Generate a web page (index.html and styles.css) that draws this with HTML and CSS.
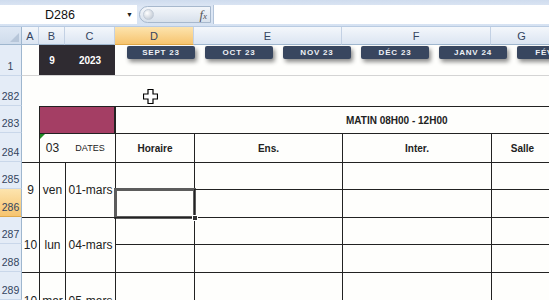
FILE: index.html
```html
<!DOCTYPE html>
<html lang="fr">
<head>
  <meta charset="UTF-8" />
  <meta name="viewport" content="width=device-width, initial-scale=1.0" />
  <title>Planning - Feuille</title>
  <link rel="stylesheet" href="styles.css">
</head>
<body>
  <!-- Barre de formule -->
  <div class="formula-bar">
    <div class="name-box">
      <span class="ref">D286</span>
      <span class="arrow">&#9660;</span>
    </div>
    <div class="fx-btn">
      <span class="knob"></span>
      <span class="fx">f<small>x</small></span>
    </div>
    <div class="formula-input"></div>
  </div>

  <!-- Feuille -->
  <div class="sheet">
    <div class="grid">
      <!-- entetes de colonnes -->
      <div class="corner"></div>
      <div class="col-head">A</div>
      <div class="col-head">B</div>
      <div class="col-head">C</div>
      <div class="col-head active">D</div>
      <div class="col-head">E</div>
      <div class="col-head">F</div>
      <div class="col-head">G</div>

      <!-- ligne 1 -->
      <div class="row-head">1</div>
      <div class="c gl"></div>
      <div class="c gl dark">9</div>
      <div class="c gl dark">2023</div>
      <div class="c gl"></div>
      <div class="c gl"></div>
      <div class="c gl"></div>
      <div class="c gl"></div>

      <!-- ligne 282 -->
      <div class="row-head">282</div>
      <div class="c span-all"></div>

      <!-- ligne 283 -->
      <div class="row-head">283</div>
      <div class="c"></div>
      <div class="c bt bl span2c maroon"></div>
      <div class="c bt bl span4c head">MATIN 08H00 - 12H00</div>

      <!-- ligne 284 -->
      <div class="row-head">284</div>
      <div class="c"></div>
      <div class="c bt bl flag">03</div>
      <div class="c bt small">DATES</div>
      <div class="c bt bl head">Horaire</div>
      <div class="c bt bl head">Ens.</div>
      <div class="c bt bl head">Inter.</div>
      <div class="c bt bl head">Salle</div>

      <!-- lignes 285-286 -->
      <div class="row-head">285</div>
      <div class="c bt span2r">9</div>
      <div class="c bt bl span2r">ven</div>
      <div class="c bt bl span2r">01-mars</div>
      <div class="c bt bl"></div>
      <div class="c bt bl"></div>
      <div class="c bt bl"></div>
      <div class="c bt bl"></div>
      <div class="row-head active">286</div>
      <div class="c bt bl selected"><span class="handle"></span></div>
      <div class="c bt bl"></div>
      <div class="c bt bl"></div>
      <div class="c bt bl"></div>

      <!-- lignes 287-288 -->
      <div class="row-head">287</div>
      <div class="c bt span2r">10</div>
      <div class="c bt bl span2r">lun</div>
      <div class="c bt bl span2r">04-mars</div>
      <div class="c bt bl"></div>
      <div class="c bt bl"></div>
      <div class="c bt bl"></div>
      <div class="c bt bl"></div>
      <div class="row-head">288</div>
      <div class="c bt bl"></div>
      <div class="c bt bl"></div>
      <div class="c bt bl"></div>
      <div class="c bt bl"></div>

      <!-- lignes 289-290 -->
      <div class="row-head">289</div>
      <div class="c bt span2r">10</div>
      <div class="c bt bl span2r">mar</div>
      <div class="c bt bl span2r">05-mars</div>
      <div class="c bt bl"></div>
      <div class="c bt bl"></div>
      <div class="c bt bl"></div>
      <div class="c bt bl"></div>
      <div class="row-head">290</div>
      <div class="c bt bl"></div>
      <div class="c bt bl"></div>
      <div class="c bt bl"></div>
      <div class="c bt bl"></div>
    </div>

    <!-- Boutons des mois (formes flottantes) -->
    <div class="months">
      <a class="month">SEPT 23</a>
      <a class="month">OCT 23</a>
      <a class="month">NOV 23</a>
      <a class="month">DÉC 23</a>
      <a class="month">JANV 24</a>
      <a class="month">FÉV 24</a>
    </div>

    <!-- Curseur -->
    <svg class="cursor" width="15" height="15" viewBox="0 0 15 15">
      <path d="M5 0.5 H10 V5 H14.5 V10 H10 V14.5 H5 V10 H0.5 V5 H5 Z" fill="#fff" stroke="#000" stroke-width="1.2"/>
    </svg>
  </div>
</body>
</html>
```

FILE: styles.css
```css
:root {
  --line: #222;
  --head-bg: #e4ecf7;
  --head-line: #9eb6ce;
  --head-text: #34445e;
  --active-top: #fde4ae;
  --active-bottom: #f6c46f;
}

* {
  box-sizing: border-box;
  margin: 0;
  padding: 0;
}

body {
  width: 549px;
  height: 300px;
  overflow: hidden;
  background: #fefefc;
  font-family: 'Liberation Sans', Arial, sans-serif;
  color: #222;
}

/* Barre de formule */
.formula-bar {
  height: 27px;
  display: flex;
  align-items: center;
  padding: 5px 0 2px;
  background: linear-gradient(#cfdcee, #dfe8f5 30%, #d6e2f2);
  border-bottom: 1px solid #b9cbe2;
}

.name-box {
  flex: none;
  width: 137px;
  height: 19px;
  background: #fff;
  display: flex;
  align-items: center;
}

.ref {
  flex: none;
  margin-left: 45px;
  font-size: 12.5px;
  color: #111;
}

.arrow {
  margin-left: auto;
  width: 11px;
  font-size: 7px;
  color: #222;
}

.fx-btn {
  flex: none;
  width: 72px;
  height: 17px;
  margin-left: 2px;
  border: 1px solid #a7b8cd;
  border-radius: 9px 0 0 9px;
  background: linear-gradient(#f3f6fa, #d8e1ec);
  display: flex;
  align-items: center;
  justify-content: space-between;
  padding: 0 3px;
}

.knob {
  width: 11px;
  height: 11px;
  border-radius: 50%;
  background: radial-gradient(circle at 35% 35%, #fff, #b5bfcc);
  border: 1px solid #c3ccd8;
}

.fx {
  font-family: 'Liberation Serif', serif;
  font-style: italic;
  font-size: 13px;
  color: #555;
}

.fx small {
  font-size: 9px;
}

.formula-input {
  flex: 1;
  height: 19px;
  margin-left: 2px;
  background: #fff;
  border-left: 1px solid #b3c4da;
}

/* Feuille */
.sheet {
  position: relative;
}

.grid {
  display: grid;
  grid-template-columns: 22px 17px 26px 50px 79px 148px 149px 62px;
  grid-template-rows: 18px 31px 30px 27px 29px 27px 28px 27px 28px 28px 28px;
}

.corner {
  background: linear-gradient(#dfe8f4, #cfdcec);
  border-right: 1px solid var(--head-line);
  border-bottom: 1px solid var(--head-line);
  position: relative;
}

.corner::after {
  content: "";
  position: absolute;
  right: 2px;
  bottom: 2px;
  border-left: 9px solid transparent;
  border-bottom: 9px solid #b7c6d9;
}

.col-head {
  background: linear-gradient(#f4f7fb, #dbe5f2);
  border-right: 1px solid #c3d1e4;
  border-bottom: 1px solid var(--head-line);
  font-size: 11px;
  color: var(--head-text);
  display: flex;
  align-items: center;
  justify-content: center;
  padding-top: 1px;
}

.col-head.active {
  background: linear-gradient(var(--active-top), var(--active-bottom));
  border-bottom-color: #e0a94a;
}

.row-head {
  background: var(--head-bg);
  border-right: 1px solid var(--head-line);
  border-bottom: 1px solid #c9d7ea;
  font-size: 10.5px;
  color: var(--head-text);
  display: flex;
  align-items: flex-end;
  justify-content: center;
  padding-bottom: 3px;
}

.row-head.active {
  background: linear-gradient(var(--active-top), var(--active-bottom));
  border-bottom-color: #e0a94a;
}

/* Cellules */
.c {
  display: flex;
  align-items: center;
  justify-content: center;
  font-size: 12px;
  white-space: nowrap;
  position: relative;
}

.bt { border-top: 1px solid var(--line); }
.bl { border-left: 1px solid var(--line); }
.gl { border-bottom: 1px solid #d4d4d4; }

.span2c { grid-column: span 2; }
.span4c { grid-column: span 4; }
.span2r { grid-row: span 2; }
.span-all { grid-column: 2 / -1; }

.dark {
  background: #2f2b31;
  color: #fff;
  font-weight: bold;
  font-size: 10px;
}

.maroon {
  background: #a43e64;
  border-right: 1px solid var(--line);
}

.head {
  font-weight: bold;
  font-size: 10px;
}

.span4c.head {
  justify-content: flex-start;
  padding-left: 230px;
}

.small {
  font-size: 9px;
}

.flag::before {
  content: "";
  position: absolute;
  left: 0;
  top: 0;
  border-top: 5px solid #1e8a22;
  border-right: 5px solid transparent;
}

.selected::after {
  content: "";
  position: absolute;
  left: -2px;
  top: -2px;
  right: -2px;
  bottom: -2px;
  border: 3px solid #5c5c5c;
}

.handle {
  position: absolute;
  right: -4px;
  bottom: -4px;
  width: 6px;
  height: 6px;
  background: #333;
  border: 1px solid #fff;
  z-index: 2;
}

/* Boutons des mois */
.months {
  position: absolute;
  left: 127px;
  top: 19px;
  display: flex;
  gap: 10px;
}

.month {
  flex: none;
  width: 68px;
  height: 13px;
  background: #38465f;
  color: #eef1f6;
  font-size: 8px;
  font-weight: bold;
  letter-spacing: 0.8px;
  display: flex;
  align-items: center;
  justify-content: center;
  border-radius: 2px;
  box-shadow: 2px 3px 4px rgba(0, 0, 0, 0.45);
}

.cursor {
  position: absolute;
  left: 143px;
  top: 62px;
}
```
